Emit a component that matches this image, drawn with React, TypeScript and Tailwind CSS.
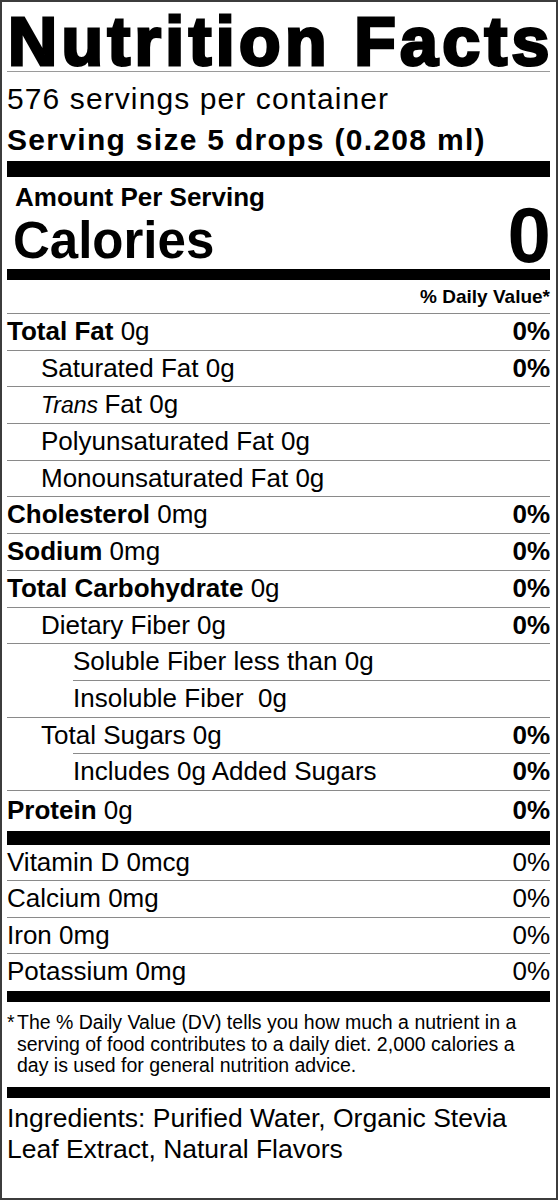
import * as React from 'react'

type Row = {
  name: string
  amount: string
  dv?: string
  bold?: boolean
  level?: 0 | 1 | 2
  italic?: string
  shortLine?: boolean
}

const rows: Row[] = [
  { name: 'Total Fat', amount: '0g', dv: '0%', bold: true },
  { name: 'Saturated Fat', amount: '0g', dv: '0%', level: 1 },
  { name: 'Fat', italic: 'Trans', amount: '0g', level: 1 },
  { name: 'Polyunsaturated Fat', amount: '0g', level: 1 },
  { name: 'Monounsaturated Fat', amount: '0g', level: 1 },
  { name: 'Cholesterol', amount: '0mg', dv: '0%', bold: true },
  { name: 'Sodium', amount: '0mg', dv: '0%', bold: true },
  { name: 'Total Carbohydrate', amount: '0g', dv: '0%', bold: true },
  { name: 'Dietary Fiber', amount: '0g', dv: '0%', level: 1 },
  { name: 'Soluble Fiber less than', amount: '0g', level: 2 },
  { name: 'Insoluble Fiber ', amount: '0g', level: 2, shortLine: true },
  { name: 'Total Sugars', amount: '0g', dv: '0%', level: 1 },
  { name: 'Includes 0g Added Sugars', amount: '', dv: '0%', level: 2, shortLine: true },
]

const vitamins = [
  { name: 'Vitamin D 0mcg', dv: '0%' },
  { name: 'Calcium 0mg', dv: '0%' },
  { name: 'Iron 0mg', dv: '0%' },
  { name: 'Potassium 0mg', dv: '0%' },
]

const NutrientRow = ({ row }: { row: Row }) => {
  const indent =
    row.level === 2 ? (row.shortLine ? 'ml-[66px]' : 'pl-[66px]') : row.level === 1 ? 'pl-[34px]' : ''
  return (
    <div
      className={`flex h-[36.7px] items-start justify-between border-t border-[#8a8a8a] text-[26px] leading-[35.7px] ${indent}`}
    >
      <span className="whitespace-pre">
        {row.italic && <span className="italic text-[23px]">{row.italic} </span>}
        {row.bold ? <span className="font-bold">{row.name}</span> : row.name}
        {row.amount ? ` ${row.amount}` : ''}
      </span>
      {row.dv && <span className="font-bold">{row.dv}</span>}
    </div>
  )
}

export default function App() {
  return (
    <div className="h-[1200px] w-[558px] border-2 border-[#3c3c3c] bg-white pl-[5px] pr-[6px] font-['Liberation_Sans',Arial,sans-serif] text-black">
      {/* title */}
      <div className="h-[70px] border-b border-[#9a9a9a] pt-[5px]">
        <h1 className="pl-[1px] text-[68px] font-bold leading-[68px] tracking-[4.4px] whitespace-nowrap [-webkit-text-stroke:3px_#000]">
          Nutrition Facts
        </h1>
      </div>

      {/* servings */}
      <div className="h-[89px] pt-[6px] text-[30px] leading-[41px] tracking-[1.1px]">
        <p>576 servings per container</p>
        <p className="font-bold tracking-[1.3px]">Serving size 5 drops (0.208 ml)</p>
      </div>

      <div className="h-[16px] bg-black" />

      {/* calories */}
      <div className="h-[92px] pl-[8px] pt-[7px] font-bold">
        <p className="text-[26px] leading-[26px]">Amount Per Serving</p>
        <div className="flex items-start justify-between">
          <span className="mt-[4.8px] -ml-[2px] text-[51px] leading-[51px]">Calories</span>
          <span className="-mr-[1px] -mt-[5px] text-[78px] leading-[60px]">0</span>
        </div>
      </div>

      <div className="h-[11px] bg-black" />

      <div className="h-[33px] pt-[7px] text-right text-[19px] font-bold leading-[19px]">% Daily Value*</div>

      {rows.map(row => (
        <NutrientRow key={row.name} row={row} />
      ))}

      <div className="flex h-[41px] justify-between border-t border-[#8a8a8a] pt-[2px] text-[26px] leading-[35.7px]">
        <span>
          <span className="font-bold">Protein</span> 0g
        </span>
        <span className="font-bold">0%</span>
      </div>

      <div className="h-[14px] bg-black" />

      {/* vitamins & minerals */}
      <div className="text-[26px] leading-[35px]">
        {vitamins.map((v, i) => (
          <div
            key={v.name}
            className={`flex justify-between ${
              i === 0 ? 'h-[36px] border-b border-[#8a8a8a]' : i === 1 ? 'h-[37px] border-b border-[#8a8a8a]' : i === 2 ? 'h-[36.5px] border-b border-[#8a8a8a]' : 'h-[36.5px]'
            }`}
          >
            <span>{v.name}</span>
            <span>{v.dv}</span>
          </div>
        ))}
      </div>

      <div className="h-[11px] bg-black" />

      {/* footnote */}
      <div className="flex h-[85px] pt-[10.5px] text-[19.5px] leading-[21.5px]">
        <span className="w-[10px] shrink-0">*</span>
        <div>
          <p>The % Daily Value (DV) tells you how much a nutrient in a</p>
          <p>serving of food contributes to a daily diet. 2,000 calories a</p>
          <p>day is used for general nutrition advice.</p>
        </div>
      </div>

      <div className="h-[11px] bg-black" />

      {/* ingredients */}
      <div className="pt-[5px] text-[26.5px] leading-[31px]">
        <p>Ingredients: Purified Water, Organic Stevia</p>
        <p>Leaf Extract, Natural Flavors</p>
      </div>
    </div>
  )
}
